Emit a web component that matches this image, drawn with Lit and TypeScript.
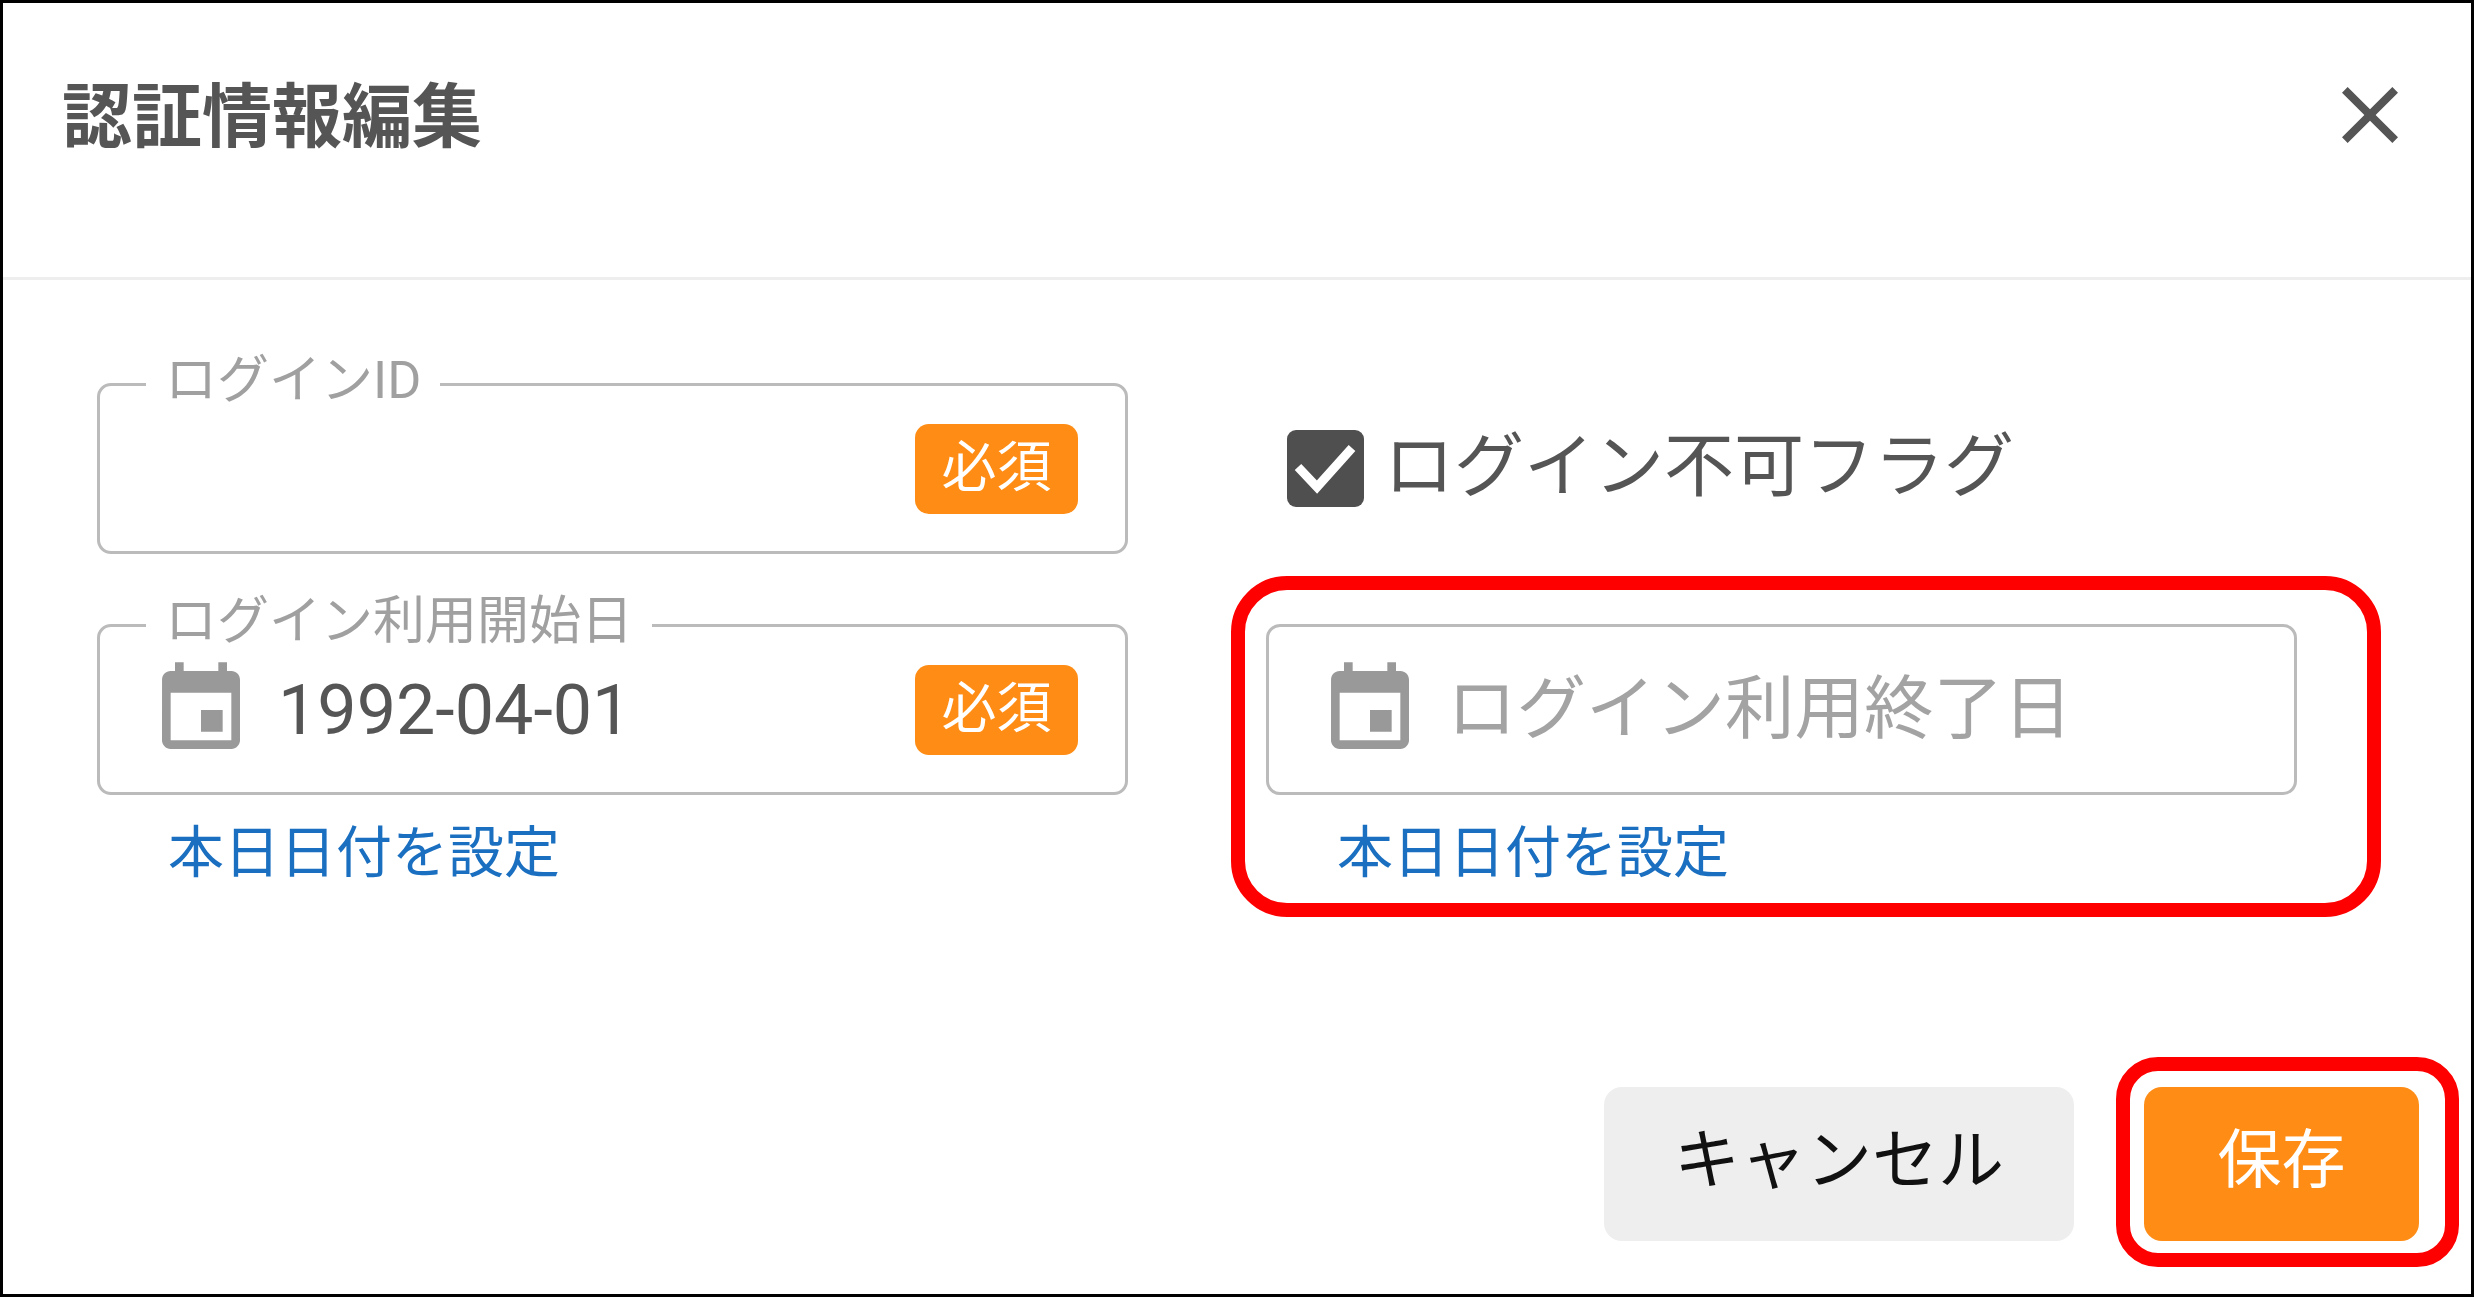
import { LitElement, html, css, svg } from "lit";
import { customElement } from "lit/decorators.js";

const eventIcon = svg`<path d="M17 12h-5v5h5v-5zM16 1v2H8V1H6v2H5c-1.11 0-1.99.9-1.99 2L3 19c0 1.1.89 2 2 2h14c1.1 0 2-.9 2-2V5c0-1.1-.9-2-2-2h-1V1h-2zm3 18H5V8h14v11z"/>`;

@customElement("app-root")
export class AppRoot extends LitElement {
  static styles = css`
    :host {
      display: block;
      position: relative;
      box-sizing: border-box;
      width: 2474px;
      height: 1297px;
      border: 3px solid #000;
      background: #fff;
      font-family: Roboto, "Noto Sans CJK JP", sans-serif;
      color: #555;
      overflow: hidden;
    }
    .dialog { display: flex; flex-direction: column; height: 100%; filter: blur(0.6px); }
    .header {
      box-sizing: border-box;
      height: 277px;
      padding: 71px 52px 0 59px;
      display: flex;
      justify-content: space-between;
      align-items: flex-start;
      border-bottom: 3px solid #eee;
      flex: none;
    }
    .title { font-size: 70px; line-height: 88px; font-weight: 700; color: #555; }
    .close { width: 96px; height: 96px; fill: #555; margin-top: -7px; margin-right: 1px; display: block; }
    .grid {
      display: grid;
      grid-template-columns: 1031px 1031px;
      column-gap: 138px;
      row-gap: 70px;
      padding: 103px 0 0 94px;
      align-items: start;
    }
    .field {
      position: relative;
      box-sizing: border-box;
      height: 171px;
      border: 3px solid #bbb;
      border-radius: 14px;
      display: flex;
      align-items: center;
      padding: 0 47px 0 62px;
    }
    .legend {
      position: absolute;
      left: 46px;
      top: -39px;
      padding: 0 19px;
      background: #fff;
      font-size: 52px;
      line-height: 68px;
      color: #a0a0a0;
    }
    .cal { width: 104px; height: 104px; fill: #999; flex: none; margin-left: -13px; margin-right: 25px; display: block; }
    .value { font-size: 70px; line-height: 80px; color: #555; flex: 1; }
    .placeholder { font-size: 69.5px; line-height: 80px; color: #a3a3a3; flex: 1; }
    .badge {
      box-sizing: border-box;
      width: 163px;
      height: 90px;
      border-radius: 14px;
      background: #ff8c14;
      color: #fff;
      font-size: 55px;
      line-height: 86px;
      text-align: center;
      flex: none;
    }
    .check-row { display: flex; align-items: center; height: 171px; padding-left: 21px; }
    .box {
      width: 77px;
      height: 77px;
      border-radius: 9px;
      background: #4f4f4f;
      flex: none;
      margin-right: 20px;
      display: block;
    }
    .check-label { font-size: 70px; line-height: 80px; color: #555; margin-top: -3px; }
    .link {
      display: block;
      margin: 22px 0 0 71px;
      font-size: 56px;
      line-height: 72px;
      color: #1a6fc0;
      text-decoration: none;
    }
    .footer {
      margin-top: auto;
      display: flex;
      justify-content: flex-end;
      gap: 70px;
      padding: 0 52px 53px 0;
    }
    button {
      height: 154px;
      border: 0;
      border-radius: 18px;
      font: inherit;
      font-size: 66px;
      line-height: 80px;
      padding: 0 0 6px;
      cursor: pointer;
    }
    .cancel { width: 470px; background: #eee; color: #111; }
    .save { width: 275px; background: #ff8c14; color: #fff; font-size: 64px; }
    .mark {
      position: absolute;
      box-sizing: border-box;
      border: 14px solid #f00;
      pointer-events: none;
    }
    .mark-date { left: 1228px; top: 573px; width: 1150px; height: 341px; border-radius: 56px; }
    .mark-save { left: 2113px; top: 1054px; width: 343px; height: 210px; border-radius: 42px; }
  `;

  private dateIcon() {
    return html`<svg class="cal" viewBox="0 0 24 24">${eventIcon}</svg>`;
  }

  render() {
    return html`
      <div class="dialog">
        <header class="header">
          <div class="title">認証情報編集</div>
          <svg class="close" viewBox="0 0 24 24"><path d="M19 6.41L17.59 5 12 10.59 6.41 5 5 6.41 10.59 12 5 17.59 6.41 19 12 13.41 17.59 19 19 17.59 13.41 12z"/></svg>
        </header>
        <div class="grid">
          <div class="field">
            <span class="legend">ログインID</span>
            <span class="value"></span>
            <span class="badge">必須</span>
          </div>
          <div class="check-row">
            <svg class="box" viewBox="0 0 77 77"><path d="M11 37l19 20 35-39" fill="none" stroke="#fff" stroke-width="9"/></svg>
            <span class="check-label">ログイン不可フラグ</span>
          </div>
          <div>
            <div class="field">
              <span class="legend">ログイン利用開始日</span>
              ${this.dateIcon()}
              <span class="value">1992-04-01</span>
              <span class="badge">必須</span>
            </div>
            <a class="link">本日日付を設定</a>
          </div>
          <div>
            <div class="field">
              ${this.dateIcon()}
              <span class="placeholder">ログイン利用終了日</span>
            </div>
            <a class="link">本日日付を設定</a>
          </div>
        </div>
        <footer class="footer">
          <button class="cancel">キャンセル</button>
          <button class="save">保存</button>
        </footer>
      </div>
      <div class="mark mark-date"></div>
      <div class="mark mark-save"></div>
    `;
  }
}
